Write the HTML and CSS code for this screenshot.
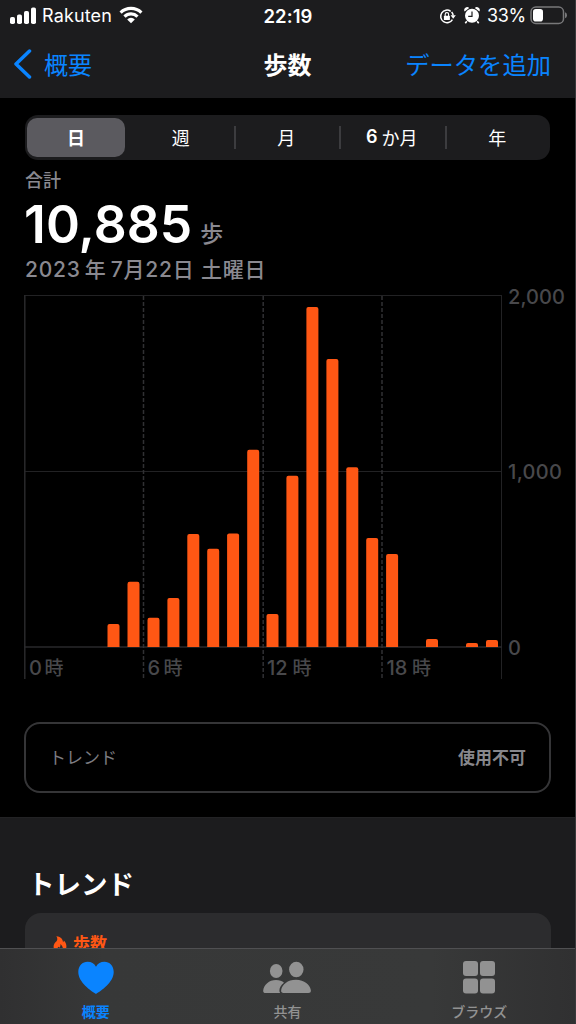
FILE: index.html
```html
<!DOCTYPE html>
<html lang="ja">
<head>
<meta charset="utf-8">
<title>歩数</title>
<link rel="stylesheet" href="styles.css">
</head>
<body>
<div class="screen">
  <header class="top">
    <div class="status">
      <div class="status-left">
        <svg class="signal" width="27" height="18" viewBox="0 0 27 18"><rect x="0" y="10" width="5" height="7" rx="1.8"/><rect x="7" y="7.4" width="5" height="9.6" rx="1.8"/><rect x="14" y="4" width="5" height="13" rx="1.8"/><rect x="21" y="0.5" width="5" height="16.5" rx="1.8"/></svg>
        <span class="carrier">Rakuten</span>
        <svg class="wifi" width="24" height="18" viewBox="0 0 24 18"><g fill="none" stroke="#fff" stroke-width="3.2"><path d="M1.6 6.6A15 15 0 0 1 22.4 6.6"/><path d="M5.5 10.6A9.3 9.3 0 0 1 18.5 10.6"/></g><path d="M8.2 13.4a5.4 5.4 0 0 1 7.6 0L12 17.2z" fill="#fff"/></svg>
      </div>
      <span class="time">22:19</span>
      <div class="status-right">
        <svg class="lock" width="17" height="17" viewBox="0 0 17 17"><path d="M13.4 11.600A6.300 6.300 0 1 1 11.700 3.300M12.600 4a6.300 6.300 0 0 1 1.600 3.500" fill="none" stroke="#fff" stroke-width="1.5"/><path d="M11.600 7.200h5.200l-2.600 3.600z" fill="#fff"/><rect x="4.900" y="7.700" width="6" height="4.400" rx=".7" fill="#fff"/><path d="M6.200 8V6.300a1.700 1.700 0 0 1 3.400 0V8" fill="none" stroke="#fff" stroke-width="1.1"/></svg>
        <svg class="alarm" width="16" height="17" viewBox="0 0 16 17"><g fill="#fff"><circle cx="8" cy="8.800" r="7"/><path d="M.6 4.600A3 3 0 0 1 5.200.9zM15.400 4.600A3 3 0 0 0 10.800.9z"/></g><path d="M2.800 14.200l-1.500 2M13.200 14.200l1.500 2" stroke="#fff" stroke-width="1.6"/><path d="M8 4.500v4.800H4.200" fill="none" stroke="#1c1c1e" stroke-width="1.2"/></svg>
        <span class="percent">33%</span>
        <svg class="battery" width="38" height="19" viewBox="0 0 38 19"><rect x="1" y="1" width="32.5" height="16.5" rx="4.8" fill="none" stroke="#78787a" stroke-width="1.5"/><rect x="3" y="3" width="10" height="12.5" rx="2.8" fill="#fff"/><path d="M35 6.200q2 .7 2 3t-2 3z" fill="#78787a"/></svg>
      </div>
    </div>
    <nav class="nav">
      <a class="back"><svg width="20" height="32" viewBox="0 0 20 32"><path d="M17.500 4L4 17 17.500 30" fill="none" stroke="#0a84ff" stroke-width="3.500" stroke-linecap="round" stroke-linejoin="round"/></svg><span>概要</span></a>
      <h1 class="title">歩数</h1>
      <a class="add">データを追加</a>
    </nav>
  </header>

  <main class="summary">
    <div class="segments">
      <span class="segment selected">日</span>
      <span class="segment">週</span>
      <span class="segment divided">月</span>
      <span class="segment divided"><b class="six">6</b><i class="thin"></i>か月</span>
      <span class="segment divided">年</span>
    </div>
    <div class="label">合計</div>
    <div class="total"><span class="number">10,885</span><span class="unit">歩</span></div>
    <div class="date">2023<i class="thin"></i>年<i class="thin"></i>7月22日 土曜日</div>
    <svg class="chart" width="575" height="400" viewBox="0 286 575 400">
      <g class="grid">
        <path d="M24 295.5H502M24 471.5H502"/>
        <path d="M501.5 295V679"/>
        <path class="axis" d="M24.8 295V679M24 647H502"/>
        <path class="dash" d="M143.5 296V679M263.2 296V679M382 296V679"/>
      </g>
      <g class="bars">
        <path d="M107.5 647V626q0-2 2-2h8q2 0 2 2v21z"/>
        <path d="M127.5 647V584q0-2.300 2-2.300h8q2 0 2 2.300v63z"/>
        <path d="M147.5 647V620q0-2.200 2-2.200h8q2 0 2 2.200v27z"/>
        <path d="M167.4 647V600q0-2 2-2h8q2 0 2 2v47z"/>
        <path d="M187.3 647V536q0-2 2-2h8q2 0 2 2v111z"/>
        <path d="M207.2 647V551q0-2.300 2-2.300h8q2 0 2 2.300v96z"/>
        <path d="M227.1 647V535.500q0-2 2-2h8q2 0 2 2V647z"/>
        <path d="M247.2 647V452q0-2.300 2-2.300h8q2 0 2 2.300v195z"/>
        <path d="M266.5 647V616q0-2 2-2h8q2 0 2 2v31z"/>
        <path d="M286.4 647V478q0-2.200 2-2.200h8q2 0 2 2.200v169z"/>
        <path d="M306.4 647V309q0-2 2-2h8q2 0 2 2v338z"/>
        <path d="M326.4 647V361q0-2 2-2h8q2 0 2 2v286z"/>
        <path d="M346.3 647V469.200q0-2 2-2h8q2 0 2 2V647z"/>
        <path d="M366.2 647V540q0-2 2-2h8q2 0 2 2v107z"/>
        <path d="M386.1 647V556q0-2 2-2h8q2 0 2 2v91z"/>
        <path d="M426 647V641q0-2 2-2h8q2 0 2 2v6z"/>
        <path d="M466 647V645q0-2 2-2h8q2 0 2 2v2z"/>
        <path d="M486 647V642q0-2 2-2h8q2 0 2 2v5z"/>
      </g>
      <g class="ticks">
        <text x="508" y="303.500" textLength="57">2,000</text>
        <text x="508" y="479.300" textLength="54">1,000</text>
        <text x="508" y="655">0</text>
        <text x="29" y="674.500">0</text><text class="hour" x="44.500" y="674.500">時</text>
        <text x="147.500" y="674.500">6</text><text class="hour" x="163.500" y="674.500">時</text>
        <text x="267" y="674.500">12</text><text class="hour" x="292.500" y="674.500">時</text>
        <text x="386.500" y="674.500">18</text><text class="hour" x="412" y="674.500">時</text>
      </g>
    </svg>
    <div class="trend-box"><span>トレンド</span><strong>使用不可</strong></div>
  </main>

  <section class="trends">
    <h2 class="heading">トレンド</h2>
    <div class="card">
      <svg width="14" height="17" viewBox="0 0 14 17"><path d="M3.300 .3C8.500 .8 10 4 10 6.300c.6-.5.8-1.100.8-1.800C13 6.500 13.700 9 13.300 11.500 12.700 15 10.500 16.800 7 16.800S.6 14.500.6 10.800C.6 8 2 6.300 3.500 5.200 4.600 3.800 4.600 2 3.300.3z" fill="#ff5714"/><path d="M7.300 8c2.300 1.800 3 4 2.200 6-.8 1.500-4 1.600-4.900 0-.6-1.400.1-2.600 1-3.300l.9 1c.8-1 1.200-2.200.8-3.700z" fill="#2c2c2e"/></svg>
      <span>歩数</span>
    </div>
  </section>

  <footer class="tabs">
    <a class="tab active">
      <svg width="36" height="34" viewBox="0 0 36 34"><path d="M18 33C13 29.800.3 21.500.3 11 .3 4.800 4.500.7 9.600.7c3.700 0 6.700 1.700 8.400 5 1.700-3.300 4.700-5 8.400-5 5.100 0 9.300 4.100 9.300 10.300C35.700 21.500 23 29.800 18 33z"/></svg>
      <span>概要</span>
    </a>
    <a class="tab">
      <svg width="48" height="34" viewBox="0 0 48 34"><ellipse cx="13.200" cy="10" rx="6.300" ry="6.900"/><ellipse cx="33.300" cy="8.500" rx="7.200" ry="7.800"/><path d="M2.600 32C.8 32 0 31 .2 29.500.8 24 6 19 13 19c3.500 0 6.200 1 8 2.700-3 2.200-4.600 4.900-4.600 7.800 0 1 .2 1.800.7 2.500zM20.500 32c-2 0-2.600-1.300-2.300-3C19 23.800 24.500 18.800 33 18.800S47 24 47.800 29c.3 1.700-.4 3-2.400 3z"/></svg>
      <span>共有</span>
    </a>
    <a class="tab">
      <svg width="34" height="34" viewBox="0 0 34 34"><rect x="1" y="0" width="15" height="15" rx="3"/><rect x="18" y="0" width="15" height="15" rx="3"/><rect x="1" y="17.500" width="15" height="15" rx="3"/><rect x="18" y="17.500" width="15" height="15" rx="3"/></svg>
      <span>ブラウズ</span>
    </a>
  </footer>
</div>
</body>
</html>
```

FILE: styles.css
```css
* { box-sizing: border-box; }
body {
  margin: 0;
  background: #000;
  color: #fff;
  font-family: Inter, "Noto Sans CJK JP", sans-serif;
}
.screen {
  display: flex;
  flex-direction: column;
  width: 576px;
  height: 1024px;
  overflow: hidden;
  border-right: 1px solid #39393b;
}
.top { height: 98px; flex: none; background: #1c1c1e; }
.status {
  display: grid;
  grid-template-columns: 1fr auto 1fr;
  align-items: center;
  height: 32px;
  padding: 0 7px 0 10px;
  line-height: 32px;
}
.status-left, .status-right { display: flex; align-items: center; }
.status-left svg, .status-right svg { flex: none; }
.status-right { justify-content: flex-end; }
.signal { fill: #fff; margin-top: -1px; }
.carrier { margin-left: 5px; font-size: 18px; letter-spacing: .15px; }
.wifi { margin-left: 7px; margin-top: -3px; }
.time { margin-right: 2px; font-size: 18.500px; font-weight: 600; letter-spacing: .1px; }
.alarm { margin-left: 8px; margin-top: -2px; }
.percent { margin-left: 7px; font-size: 18px; letter-spacing: -.3px; }
.battery { margin-left: 4px; margin-top: -2px; }
.nav {
  display: grid;
  grid-template-columns: 1fr auto 1fr;
  align-items: center;
  height: 62px;
  padding: 0 24px 0 12px;
  font-size: 24px;
  color: #0a84ff;
}
.back { display: flex; align-items: center; gap: 12px; }
.title { margin: 0 0 0 12px; font-size: 24px; font-weight: 700; color: #fff; }
.add { text-align: right; font-size: 24.300px; }
.summary { flex: none; height: 719px; padding-top: 17px; }
.segments {
  display: grid;
  grid-template-columns: 101px repeat(4, 1fr);
  width: 525px;
  height: 45px;
  margin-left: 25px;
  padding: 3px 0 3px 2px;
  border-radius: 13px;
  background: #1c1c1e;
}
.segment {
  display: flex;
  align-items: center;
  justify-content: center;
  padding-bottom: 2px;
  font-size: 18px;
  font-weight: 400;
}
.selected { width: 98px; border-radius: 10px; background: #5b5a5f; font-weight: 700; }
.divided { background: linear-gradient(#3c3c3f, #3c3c3f) no-repeat 0 50% / 2px 23px; }
.six { font-weight: 600; }
.thin { display: inline-block; width: 4px; }
.label { height: 42px; padding-left: 25px; font-size: 18px; font-weight: 500; line-height: 42px; color: #8a8990; }
.total { display: flex; align-items: baseline; height: 47px; padding-left: 24px; line-height: 44px; }
.number { font-size: 51.500px; font-weight: 600; letter-spacing: .1px; }
.unit { position: relative; top: -1px; margin-left: 8px; font-size: 23px; font-weight: 500; color: #8a8990; }
.date { height: 37px; padding-left: 25px; font-size: 21px; font-weight: 500; line-height: 41px; letter-spacing: .8px; color: #8a8990; }
.chart { display: block; }
.grid { fill: none; stroke: #222224; stroke-width: 1; }
.axis { stroke: #29292b; stroke-width: 1.500; }
.dash { stroke: #303033; stroke-width: 1.500; stroke-dasharray: 4 2; }
.bars { fill: #ff5714; }
.ticks { font-size: 20px; font-weight: 500; fill: #48484b; }
.hour { font-size: 19px; }
.trend-box {
  display: flex;
  align-items: center;
  justify-content: space-between;
  width: 527px;
  height: 71px;
  margin: 36px 0 0 24px;
  padding: 0 23px 2px;
  border: 2px solid #353537;
  border-radius: 16px;
  font-size: 17px;
  color: #7c7c81;
}
.trend-box strong { font-weight: 700; color: #87878c; }
.trends { flex: none; height: 131px; background: #1c1c1e; border-top: 1px solid #222224; overflow: hidden; }
.heading { margin: 46px 0 0 28px; height: 40px; line-height: 40px; font-size: 26.500px; font-weight: 700; }
.card {
  display: flex;
  align-items: flex-start;
  gap: 6px;
  width: 526px;
  height: 80px;
  margin: 9px 0 0 25px;
  padding: 23px 0 0 28px;
  border-radius: 16px;
  background: #2c2c2e;
  font-size: 17px;
  font-weight: 700;
  line-height: 17px;
  color: #ff5714;
}
.tabs {
  display: grid;
  grid-template-columns: repeat(3, 1fr);
  flex: none;
  height: 76px;
  border-top: 1px solid #505052;
  background: linear-gradient(90deg, #303031, #373838 18%, #383939 75%, #303031);
}
.tab {
  display: flex;
  flex-direction: column;
  align-items: center;
  padding-top: 12px;
  font-size: 14px;
  font-weight: 500;
  line-height: 20px;
  color: #929292;
  fill: #929292;
}
.tab span { margin-top: 7px; }
.active { color: #0a84ff; fill: #0a84ff; font-weight: 700; }
```
